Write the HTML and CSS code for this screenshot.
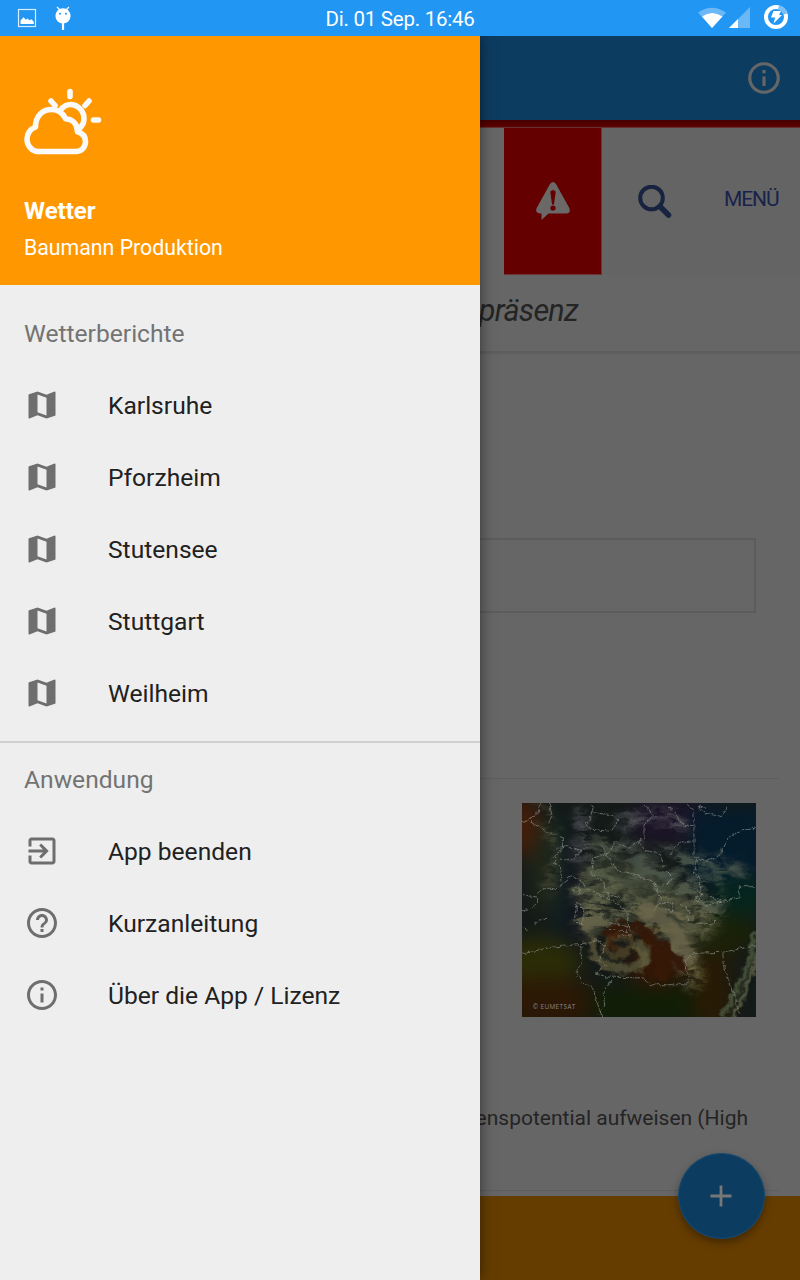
FILE: index.html
```html
<!DOCTYPE html>
<html lang="de">
<head>
<meta charset="utf-8">
<title>Wetter</title>
<link rel="stylesheet" href="styles.css">
</head>
<body>
<div class="screen">
  <header class="status">
    <div class="status-left">
      <svg width="20" height="20" viewBox="0 0 20 20"><rect x="1.500" y="1.500" width="17" height="17" fill="none" stroke="#d8edff" stroke-width="1.200"/><path d="M3.500 16v-3.500l3-3.300 2.500 2.600 1.500-1.200 2 1.700 2-1 2.300 2.500V16z" fill="#fff"/></svg>
      <svg width="18" height="26" viewBox="0 0 18 26"><path d="M3 2l3 3M15 2l-3 3" stroke="#fff" stroke-width="1.200"/><circle cx="9" cy="10.800" r="7.600" fill="#fff"/><circle cx="6" cy="8.700" r="1" fill="#2196f3"/><circle cx="12" cy="8.700" r="1" fill="#2196f3"/><path d="M9 18v7" stroke="#fff" stroke-width="2.200"/></svg>
    </div>
    <div class="clock">Di. 01 Sep. 16:46</div>
    <div class="status-right">
      <svg width="30" height="22" viewBox="0 0 30 22"><path d="M1 5.500Q15-4 29 5.500L15 21z" fill="#6bb8f7"/><path d="M5 9.500Q15 2.500 25.500 9.500L15 21z" fill="#fff"/></svg>
      <svg width="22" height="22" viewBox="0 0 22 22"><path d="M0 21L21 0v21z" fill="#6bb8f7"/><path d="M0 21l9-9v9z" fill="#fff"/></svg>
      <svg width="26" height="26" viewBox="0 0 26 26"><circle cx="13" cy="12" r="10" fill="none" stroke="#fff" stroke-width="4"/><path d="M15.500 2.300a10 10 0 0 1 7 6.700" fill="none" stroke="#7ac0f8" stroke-width="4"/><path d="M10.500 6h7.500l-2 4h3l-8.500 8.500 1.700-6H8z" fill="#fff"/></svg>
    </div>
  </header>
  <div class="body">
    <nav class="drawer">
      <div class="hero">
        <svg class="logo" width="80" height="70" viewBox="0 0 80 70" fill="none" stroke="#fafafa" stroke-width="5.600" stroke-linecap="round" stroke-linejoin="round"><path d="M13 63.500a12.500 12.500 0 0 1-10-12.200c0-6 3.500-10.300 8.500-12.300 0-11 7-17.500 16-17.500 6.500 0 11.500 3.500 14 9.200 7 .3 12 5.300 12 13 5 1.500 8 5 8 9.800 0 5.500-4 10-9.500 10z"/><path d="M36.500 22c9-11 23.500-3.500 23.500 8.500 0 4-1.500 7-4 9.500M46 3.500v5M27 13l4 4.500M65 13l-4 4.500M69.500 32h5"/></svg>
        <div class="app-name"><span>Wetter</span></div>
        <div class="author"><span>Baumann Produktion</span></div>
      </div>
      <section class="group">
        <h2><span>Wetterberichte</span></h2>
        <a class="item"><svg class="icon" viewBox="0 0 24 24"><path d="M20.500 3l-.16.030L15 5.100 9 3 3.360 4.900c-.21.070-.36.250-.36.480V20.500c0 .28.220.5.500.5l.16-.030L9 18.900l6 2.100 5.640-1.900c.21-.070.360-.25.360-.48V3.500c0-.28-.22-.5-.5-.5zM15 19l-6-2.110V5l6 2.110V19z"/></svg><span>Karlsruhe</span></a>
        <a class="item"><svg class="icon" viewBox="0 0 24 24"><path d="M20.500 3l-.16.030L15 5.100 9 3 3.360 4.900c-.21.070-.36.250-.36.480V20.500c0 .28.220.5.500.5l.16-.030L9 18.900l6 2.100 5.640-1.900c.21-.070.360-.25.360-.48V3.500c0-.28-.22-.5-.5-.5zM15 19l-6-2.110V5l6 2.110V19z"/></svg><span>Pforzheim</span></a>
        <a class="item"><svg class="icon" viewBox="0 0 24 24"><path d="M20.500 3l-.16.030L15 5.100 9 3 3.360 4.900c-.21.070-.36.250-.36.480V20.500c0 .28.220.5.500.5l.16-.030L9 18.900l6 2.100 5.640-1.900c.21-.070.360-.25.360-.48V3.500c0-.28-.22-.5-.5-.5zM15 19l-6-2.110V5l6 2.110V19z"/></svg><span>Stutensee</span></a>
        <a class="item"><svg class="icon" viewBox="0 0 24 24"><path d="M20.500 3l-.16.030L15 5.100 9 3 3.360 4.900c-.21.070-.36.250-.36.480V20.500c0 .28.220.5.500.5l.16-.030L9 18.900l6 2.100 5.640-1.900c.21-.070.360-.25.360-.48V3.500c0-.28-.22-.5-.5-.5zM15 19l-6-2.110V5l6 2.110V19z"/></svg><span>Stuttgart</span></a>
        <a class="item"><svg class="icon" viewBox="0 0 24 24"><path d="M20.500 3l-.16.030L15 5.100 9 3 3.360 4.900c-.21.070-.36.250-.36.480V20.500c0 .28.220.5.500.5l.16-.030L9 18.900l6 2.100 5.640-1.900c.21-.070.360-.25.360-.48V3.500c0-.28-.22-.5-.5-.5zM15 19l-6-2.110V5l6 2.110V19z"/></svg><span>Weilheim</span></a>
      </section>
      <section class="group second">
        <h2><span>Anwendung</span></h2>
        <a class="item"><svg class="icon" viewBox="0 0 24 24"><path d="M10.090 15.590L11.500 17l5-5-5-5-1.410 1.410L12.670 11H3v2h9.670l-2.580 2.590zM19 3H5c-1.110 0-2 .9-2 2v4h2V5h14v14H5v-4H3v4c0 1.100.89 2 2 2h14c1.100 0 2-.9 2-2V5c0-1.100-.9-2-2-2z"/></svg><span>App beenden</span></a>
        <a class="item"><svg class="icon" viewBox="0 0 24 24"><path d="M11 18h2v-2h-2v2zm1-16C6.480 2 2 6.480 2 12s4.480 10 10 10 10-4.480 10-10S17.520 2 12 2zm0 18c-4.410 0-8-3.590-8-8s3.590-8 8-8 8 3.590 8 8-3.590 8-8 8zm0-14c-2.210 0-4 1.790-4 4h2c0-1.100.9-2 2-2s2 .9 2 2c0 2-3 1.750-3 5h2c0-2.250 3-2.500 3-5 0-2.210-1.790-4-4-4z"/></svg><span>Kurzanleitung</span></a>
        <a class="item"><svg class="icon" viewBox="0 0 24 24"><path d="M11 17h2v-6h-2v6zm1-15C6.480 2 2 6.480 2 12s4.480 10 10 10 10-4.480 10-10S17.520 2 12 2zm0 18c-4.410 0-8-3.590-8-8s3.590-8 8-8 8 3.590 8 8-3.590 8-8 8zM11 9h2V7h-2v2z"/></svg><span>Über die App / Lizenz</span></a>
      </section>
    </nav>
    <main class="page">
      <div class="appbar"><svg width="38" height="38" viewBox="0 0 24 24" fill="#666"><path d="M11 17h2v-6h-2v6zm1-15C6.480 2 2 6.480 2 12s4.480 10 10 10 10-4.480 10-10S17.520 2 12 2zm0 18c-4.410 0-8-3.590-8-8s3.590-8 8-8 8 3.590 8 8-3.590 8-8 8zM11 9h2V7h-2v2z"/></svg></div>
      <div class="redline"></div>
      <div class="site-nav">
        <div class="alert"><svg width="36" height="40" viewBox="0 0 36 40"><path d="M15 3q3-4 6 0l13.300 24q1.800 5-3 5.500H13.500L6.500 39v-6.500Q-.5 32.500 1.700 27z" fill="#6b6868"/><path d="M15.300 10.500q2.700-3 5.400 0l-1.700 13h-2z" fill="#640000"/><circle cx="18" cy="27" r="2.600" fill="#640000"/></svg></div>
        <div class="tools"><svg width="34" height="34" viewBox="0 0 34 34" fill="none" stroke="#17233f"><circle cx="13.500" cy="13" r="11.300" stroke-width="4"/><path d="M22 21.500l8.500 8.500" stroke-width="5.500" stroke-linecap="round"/></svg><span class="menu">MENÜ</span></div>
      </div>
      <div class="slogan"><span>präsenz</span></div>
      <div class="search"><div class="field"></div></div>
      <div class="report">
        <svg class="satellite" width="234" height="214" viewBox="36 39 702 642" preserveAspectRatio="none" color-interpolation-filters="sRGB">
          <defs>
            <filter id="soft" x="-50%" y="-50%" width="200%" height="200%"><feGaussianBlur stdDeviation="28"/></filter>
            <filter id="cloud" x="-20%" y="-20%" width="140%" height="140%"><feTurbulence type="fractalNoise" baseFrequency=".014 .034" numOctaves="5" seed="7" result="n"/><feColorMatrix in="n" values="0 0 0 0 1  0 0 0 0 1  0 0 0 0 1  3.400 0 0 0 -1.150" result="m"/><feGaussianBlur in="SourceGraphic" stdDeviation="14" result="b"/><feComposite in="b" in2="m" operator="in" result="c"/><feDisplacementMap in="c" in2="n" scale="50" xChannelSelector="R" yChannelSelector="G"/></filter>
            <filter id="wisp" x="-20%" y="-20%" width="140%" height="140%"><feTurbulence type="fractalNoise" baseFrequency=".035" numOctaves="4" seed="3" result="n"/><feGaussianBlur in="SourceGraphic" stdDeviation="5" result="b"/><feDisplacementMap in="b" in2="n" scale="38" xChannelSelector="R" yChannelSelector="G"/></filter>
            <filter id="rough"><feTurbulence type="fractalNoise" baseFrequency=".06" numOctaves="2" result="n"/><feDisplacementMap in="SourceGraphic" in2="n" scale="16" xChannelSelector="R" yChannelSelector="G"/></filter>
          </defs>
          <rect x="36" y="39" width="702" height="642" fill="#141a18"/>
          <g filter="url(#soft)">
            <ellipse cx="45" cy="110" rx="42" ry="95" fill="#4a1d09"/>
            <ellipse cx="110" cy="230" rx="50" ry="140" fill="#202719"/>
            <ellipse cx="190" cy="310" rx="45" ry="170" fill="#14171d"/>
            <rect x="370" y="20" width="230" height="140" fill="#1c1428"/>
            <rect x="540" y="50" width="240" height="240" fill="#051c2c"/>
            <rect x="610" y="260" width="160" height="120" fill="#06251e"/>
            <ellipse cx="90" cy="520" rx="120" ry="80" fill="#2b2c07"/>
            <ellipse cx="100" cy="640" rx="180" ry="75" fill="#2c1805"/>
            <rect x="240" y="590" width="370" height="110" fill="#111e06"/>
            <rect x="550" y="490" width="110" height="220" fill="#291b04"/>
            <ellipse cx="630" cy="430" rx="110" ry="60" fill="#1b2207"/>
            <ellipse cx="440" cy="530" rx="90" ry="60" fill="#351605"/>
            <path d="M150 70v370" stroke="#08252c" stroke-width="18"/>
            <path d="M240 280q140-60 230 70l60 130" fill="none" stroke="#353a2c" stroke-width="110"/>
          </g>
          <g filter="url(#cloud)" fill="none" stroke-linecap="round">
            <path d="M100 60q45 100 20 240" stroke="#454631" stroke-width="32"/>
            <path d="M215 80v120M340 100q90-50 180 5" stroke="#54545a" stroke-width="42"/>
            <path d="M270 190q30 100 150 90t190 70" stroke="#4f5846" stroke-width="80"/>
            <path d="M320 150q90 100 300 130M460 185l230 60" stroke="#48534a" stroke-width="48"/>
            <path d="M240 390q150-80 340 10" stroke="#636248" stroke-width="95"/>
            <path d="M240 290l180 90" stroke="#5c6047" stroke-width="100"/>
            <path d="M400 390q90 20 150 170" stroke="#706b45" stroke-width="70"/>
          </g>
          <g filter="url(#wisp)" fill="none" stroke-linecap="round">
            <path d="M400 360q90 30 130 145" stroke="#66634a" stroke-width="52" opacity=".8"/>
            <path d="M290 425q80-35 130 10t100 95" stroke="#32190a" stroke-width="28"/>
            <path d="M405 450q70 50 50 100" stroke="#351806" stroke-width="46"/>
            <path d="M245 455q15 90 105 80t38-75" stroke="#4c4a32" stroke-width="28"/>
            <path d="M375 470q40 30 17 65" stroke="#605a3a" stroke-width="15"/>
            <path d="M350 485q-35 30-58 0-5-45 35-46 42 5 35 32-18 23-40 5" stroke="#453c25" stroke-width="20"/>
            <path d="M328 480q-35-10-25-40 30-16 65-3" stroke="#482009" stroke-width="8"/>
            <path d="M740 430q-25 120-105 250" stroke="#465139" stroke-width="16"/>
            <path d="M742 490q-15 80-75 190" stroke="#5b6045" stroke-width="12"/>
          </g>
          <g filter="url(#rough)" fill="none" stroke="#929690" stroke-width="1.900" stroke-dasharray="15 3">
            <path d="M36 95l45-20 13-35M60 95l65 38 35 10v30l-25 20-2 25 18 8 5 50M118 40l10 40-12 20M140 175l30-8 45 15-30 30-35-5M36 362q55-5 46-40l-46-8M82 310q20-22 55-12l50-42 23 14 25 30 50 22 40 20 30 30-5 55-50-9M250 45l-8 40-15 20 27 16 50 2 22-33-30-17-50-5M405 45l25 30-28 30v40l-45 30-42-20-15 30-50 20-5 50 35 20 15 40 50 10M275 170l45 68 62 18 50 25 20 45-20 38M385 155l20 25 50 15 5 40 30 30-42 30M480 50l45 60 27-5V65l-20-22M552 110v90q55 25 80-10 15-55 65-68l41-8M480 195l30-38 40-5M560 210l-10 40 20 15 4 52-20 8 30 22 42-10 42-10 20-7v-30h50M590 55l-25-5 25 20 45 10 15-30M197 315l15-5-3-20-18 8zM202 335l22 30-11 42-20-18zM70 405l20-15 20-2M50 425l-4-12M450 340l40 0-4 28-24-14M510 340l28 20-8 40M560 398l42 8 18-14M298 398l60 10 5 30-40-3M560 300l20 18-16 14M600 322l36 8-16 14"/>
            <path d="M36 492l85-20 85-8 55-15 25 20-22 40 20 20-25 20 30 12 115 3 15 20h95q30 5 23-28-15-20-10-42 15-28 50-25l60-2 100-20M212 467l3 50-14 32 10 22 38 25 26 85M303 572l-23 40 4 35-20 28M638 490l10 60 40 120"/>
          </g>
          <text class="credit" x="68" y="656" textLength="128">© EUMETSAT</text>
        </svg>
      </div>
      <div class="paragraph"><span>enspotential aufweisen (High</span></div>
      <div class="rule"></div>
      <div class="bottombar"></div>
      <button class="fab" aria-label="Hinzufügen"><svg width="22" height="22" viewBox="0 0 22 22"><path d="M11 .5v21M.5 11h21" stroke="#777" stroke-width="2.800"/></svg></button>
    </main>
  </div>
</div>
</body>
</html>
```
FILE: styles.css
```css
* { box-sizing: border-box; }
body { margin: 0; font-family: Roboto, "Noto Sans", sans-serif; }
.screen { width: 800px; height: 1280px; overflow: hidden; display: flex; flex-direction: column; }
svg { display: block; flex: none; }

.status { height: 36px; flex: none; background: #2196f3; color: #fff; display: grid; grid-template-columns: 1fr auto 1fr; align-items: center; padding: 0 11px 0 17px; }
.status-left { display: flex; gap: 17px; align-items: center; }
.clock { font-size: 20.5px; letter-spacing: -.25px; line-height: 36px; padding: 1px 6px 0 0; height: 36px; white-space: nowrap; }
.status-right { display: flex; justify-content: flex-end; align-items: center; }
.status-right svg:nth-child(2) { margin: 0 12px 0 2px; }

.body { flex: 1; display: flex; min-height: 0; }
.drawer { width: 480px; flex: none; background: #eee; z-index: 2; box-shadow: 0 0 14px rgba(0, 0, 0, .5); clip-path: inset(0 -24px 0 0); }
.hero { height: 249px; background: #ff9800; color: #fff; padding: 52px 24px 0; }
.app-name { font-size: 24px; font-weight: 700; line-height: 36px; margin-top: 35px; }
.author { font-size: 21.3px; line-height: 36px; margin-top: 1px; }
.group { padding-top: 12px; height: 456px; }
.group.second { border-top: 2px solid #d0d0d0; padding-top: 0; height: auto; }
.group h2 { margin: 0; padding-left: 24px; height: 72px; line-height: 74px; font-size: 24.6px; font-weight: 400; color: #737373; }
.item { height: 72px; display: flex; align-items: center; padding-left: 24px; gap: 48px; font-size: 24.6px; color: #212121; }
.item span { padding-top: 1px; }
.icon { width: 36px; height: 36px; fill: #6e6e6e; }

.page { width: 320px; background: #666; display: flex; flex-direction: column; position: relative; }
.appbar { height: 84px; flex: none; background: #0d3c61; display: flex; align-items: center; justify-content: flex-end; padding-right: 17px; }
.redline { height: 8px; flex: none; background: linear-gradient(#480000, #5c0000 80%, #643030 90%); }
.site-nav { height: 147px; flex: none; display: flex; padding-left: 24px; }
.alert { width: 98px; background: #640000; border-right: 1px solid #6b3535; border-bottom: 1px solid #6b3535; display: flex; align-items: center; justify-content: center; }
.tools { flex: 1; background: #646464; display: flex; align-items: center; padding-left: 36px; gap: 52px; }
.menu { font-size: 21px; letter-spacing: -1.1px; color: #17234a; padding-bottom: 6px; }
.slogan { height: 79px; flex: none; border-bottom: 3px solid #5e5e5e; display: flex; justify-content: flex-end; padding: 0 222px 6px 0; align-items: center; font-size: 30.5px; letter-spacing: -.7px; font-style: italic; color: #242424; }
.search { height: 425px; flex: none; margin-right: 21px; padding: 184px 23px 0 0; border-bottom: 1px solid #5e5e5e; }
.field { height: 75px; border: 2px solid #5c5c5c; border-left: 0; }
.report { height: 284px; flex: none; padding: 24px 0 0 42px; }
.credit { font: 19px "Open Sans", sans-serif; fill: #898989; }
.paragraph { height: 127px; flex: none; display: flex; justify-content: flex-end; padding: 41px 52px 0 0; font-size: 21px; line-height: 28px; color: #242424; white-space: nowrap; }
.rule { height: 6px; flex: none; margin-right: 21px; border-top: 1px solid #5e5e5e; }
.bottombar { flex: 1; background: #663d00; }
.fab { position: absolute; right: 35px; bottom: 41px; width: 87px; height: 86px; padding: 0 2px 0 0; border: 1px solid #164a73; border-radius: 50%; background: #0d3c61; box-shadow: 0 4px 8px rgba(0, 0, 0, .35); display: flex; align-items: center; justify-content: center; }
```
